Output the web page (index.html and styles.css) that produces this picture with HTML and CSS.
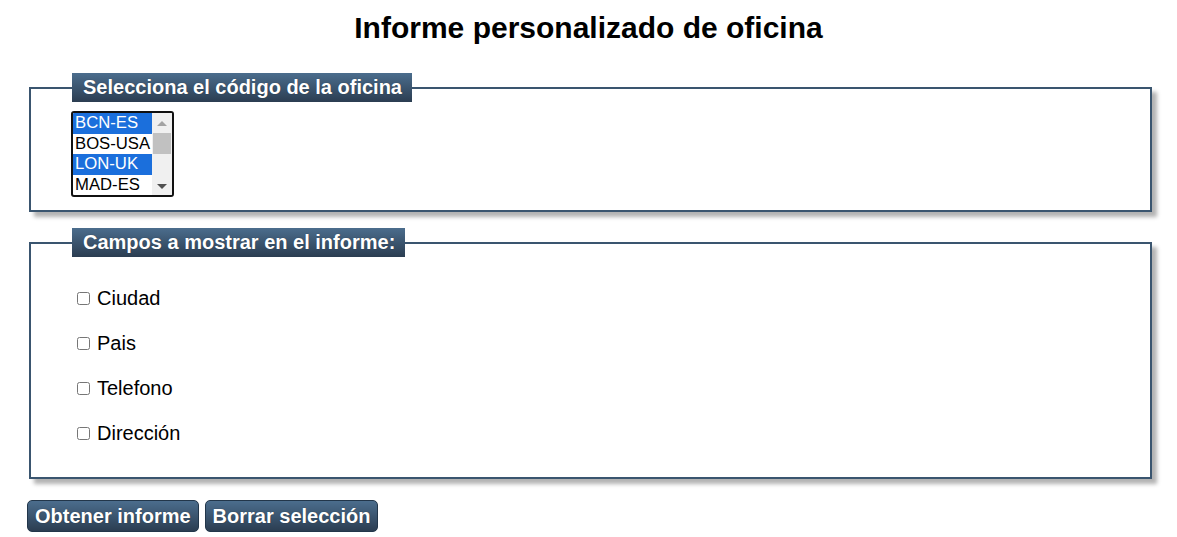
FILE: index.html
```html
<!DOCTYPE html>
<html lang="es">
<head>
<meta charset="utf-8">
<title>Informe personalizado de oficina</title>
<link rel="stylesheet" href="styles.css">
</head>
<body>
<h1 class="title">Informe personalizado de oficina</h1>
<form class="form">
  <fieldset class="box box-office">
    <legend class="box-legend">Selecciona el código de la oficina</legend>
    <div class="listbox" role="listbox" aria-multiselectable="true" tabindex="0">
      <ul class="options">
        <li class="option is-selected" role="option" aria-selected="true">BCN-ES</li>
        <li class="option" role="option" aria-selected="false">BOS-USA</li>
        <li class="option is-selected" role="option" aria-selected="true">LON-UK</li>
        <li class="option" role="option" aria-selected="false">MAD-ES</li>
      </ul>
      <div class="scrollbar" aria-hidden="true">
        <span class="arrow arrow-up"></span>
        <span class="track"><span class="thumb"></span></span>
        <span class="arrow arrow-down"></span>
      </div>
    </div>
  </fieldset>
  <fieldset class="box box-fields">
    <legend class="box-legend">Campos a mostrar en el informe:</legend>
    <label class="field"><input type="checkbox" class="check">Ciudad</label>
    <label class="field"><input type="checkbox" class="check">Pais</label>
    <label class="field"><input type="checkbox" class="check">Telefono</label>
    <label class="field"><input type="checkbox" class="check">Dirección</label>
  </fieldset>
  <div class="actions">
    <button type="button" class="btn">Obtener informe</button>
    <button type="button" class="btn">Borrar selección</button>
  </div>
</form>
</body>
</html>
```
FILE: styles.css
```css
html, body {
  margin: 0;
  padding: 0;
  background: #fff;
}
body {
  font-family: "Liberation Sans", Arial, sans-serif;
  color: #000;
}
.title {
  margin: 0;
  padding-top: 11px;
  height: 50px;
  box-sizing: border-box;
  text-align: center;
  font-size: 30px;
  font-weight: bold;
  line-height: 34px;
}
.form {
  padding: 0 25px 0 29px;
}
.box {
  margin: 23px 0 0 0;
  border: 2px solid #3a556f;
  padding: 9px 0 13px 40px;
  box-shadow: 5px 5px 4px #b3b3b3;
  min-width: 0;
}
.box-fields {
  margin-top: 16px;
  padding: 30px 0 33px 40px;
  display: flex;
  flex-direction: column;
  gap: 23px;
}
.box-legend {
  background: linear-gradient(#4b6d8d, #2b3d51);
  color: #fff;
  font-weight: bold;
  font-size: 20px;
  line-height: 29px;
  padding: 0 10px 0 11px;
  margin-left: 1px;
  text-shadow: 0 0 1px rgba(0,0,0,0.45);
}

/* listbox */
.listbox {
  display: flex;
  width: 103px;
  height: 86px;
  box-sizing: border-box;
  border: 2px solid #111;
  border-radius: 3px;
  overflow: hidden;
  background: #fff;
}
.options {
  list-style: none;
  margin: 0;
  padding: 0;
  width: 79px;
  font-size: 16.7px;
}
.option {
  height: 20.5px;
  line-height: 20.5px;
  padding-left: 2px;
  white-space: nowrap;
  color: #000;
}
.option.is-selected {
  background: #1b6fdc;
  color: #fff;
}
.scrollbar {
  width: 20px;
  background: #f0f0f0;
  display: flex;
  flex-direction: column;
}
.arrow {
  height: 17px;
  display: flex;
  align-items: center;
  justify-content: center;
  flex: none;
}
.arrow::before {
  content: "";
  width: 0;
  height: 0;
  border-left: 5px solid transparent;
  border-right: 5px solid transparent;
}
.arrow-up {
  height: 20px;
}
.arrow-up::before {
  border-bottom: 5px solid #a3a3a3;
}
.arrow-down::before {
  border-top: 5px solid #505050;
}
.track {
  flex: 1;
  padding: 0 1px;
}
.thumb {
  display: block;
  height: 21px;
  background: #c1c1c1;
}

/* checkboxes */
.field {
  display: flex;
  align-items: center;
  gap: 7px;
  font-size: 20px;
  line-height: 22px;
  height: 22px;
  padding-left: 6px;
}
.check {
  margin: 0;
  width: 13px;
  height: 13px;
  flex: none;
}

/* buttons */
.actions {
  display: flex;
  gap: 6px;
  margin: 21px 0 0 -2px;
}
.btn {
  background: linear-gradient(#4b6d8d, #2b3d51);
  color: #fff;
  font-family: "Liberation Sans", Arial, sans-serif;
  font-weight: bold;
  font-size: 20px;
  height: 32px;
  padding: 0 7px;
  border: 1px solid #22364a;
  border-radius: 5px;
  text-shadow: 0 0 1px rgba(0,0,0,0.45);
}
```
